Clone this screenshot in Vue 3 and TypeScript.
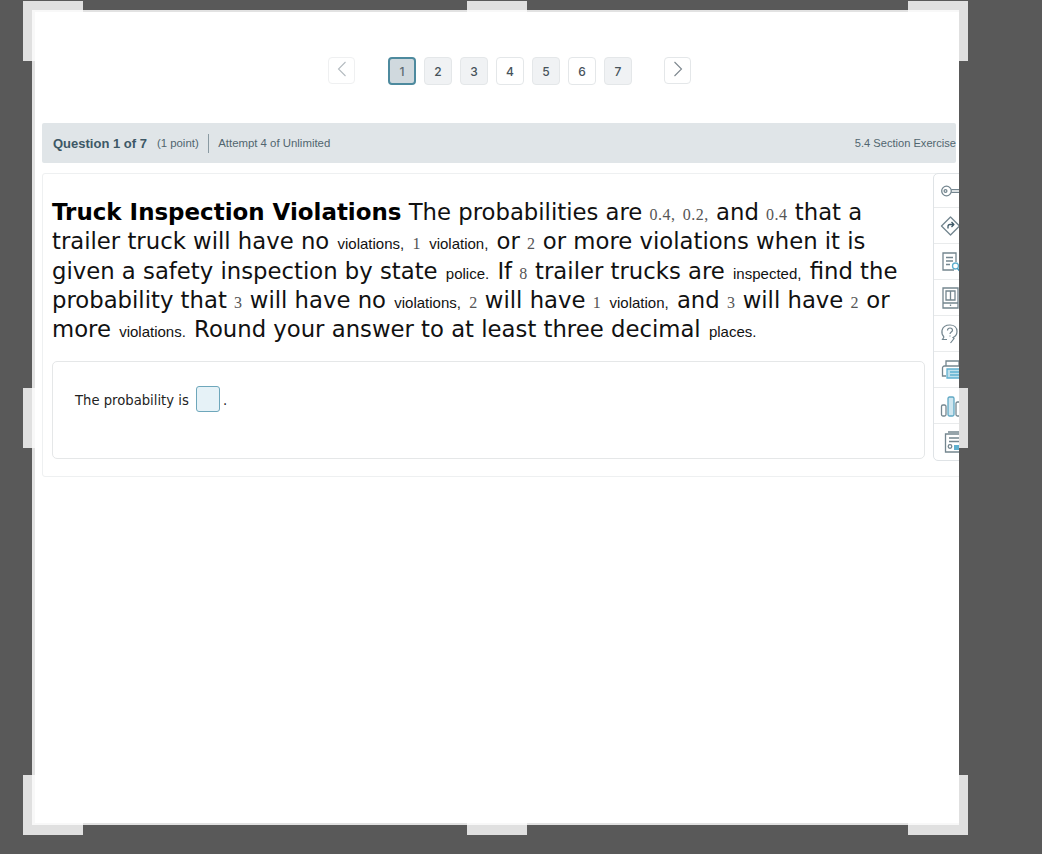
<script setup lang="ts">
const pages = [
  { n: 1, state: 'current' },
  { n: 2, state: 'seen' },
  { n: 3, state: 'seen' },
  { n: 4, state: 'plain' },
  { n: 5, state: 'seen' },
  { n: 6, state: 'plain' },
  { n: 7, state: 'seen' },
]

const handles = ['tl', 'tc', 'tr', 'ml', 'mr', 'bl', 'bc', 'br']
</script>

<template>
  <div class="backdrop">
    <div class="crop">
      <nav class="pager">
        <button class="arrow arrow--off">
          <svg viewBox="0 0 14 18" width="14" height="18" fill="none" stroke="#b4bbc0" stroke-width="1.1">
            <path d="M10.500 2 3.500 9l7 7" />
          </svg>
        </button>
        <div class="pages">
          <span v-for="p in pages" :key="p.n" class="page" :class="`page--${p.state}`">{{ p.n }}</span>
        </div>
        <button class="arrow arrow--next">
          <svg viewBox="0 0 14 18" width="14" height="18" fill="none" stroke="#7d878e" stroke-width="1.1">
            <path d="M3.500 2l7 7-7 7" />
          </svg>
        </button>
      </nav>

      <header class="qbar">
        <div class="qbar-left">
          <strong>Question 1 of 7</strong>
          <span class="pts">(1 point)</span>
          <span class="sep" />
          <span class="attempt">Attempt 4 of Unlimited</span>
        </div>
        <span class="section">5.4 Section Exercise</span>
      </header>

      <div class="qwrap">
        <section class="qcard">
          <p class="stem"><b>Truck Inspection Violations</b> The probabilities are <i class="n">0.4,</i> <i class="n">0.2,</i> and <i class="n">0.4</i> that a trailer truck will have no <small>violations,</small> <i class="n">1</i> <small>violation,</small> or <i class="n">2</i> or more violations when it is given a safety inspection by state <small>police.</small> If <i class="n">8</i> trailer trucks are <small>inspected,</small> find the probability that <i class="n">3</i> will have no <small>violations,</small> <i class="n">2</i> will have <i class="n">1</i> <small>violation,</small> and <i class="n">3</i> will have <i class="n">2</i> or more <small>violations.</small> Round your answer to at least three decimal <small>places.</small></p>
          <div class="answer">
            The probability is <span class="blank" />.
          </div>
        </section>

        <aside class="tools">
          <div class="tool">
            <svg viewBox="0 0 24 24" width="24" height="24" fill="none" stroke="#74868f" stroke-width="1.300">
              <circle cx="6.500" cy="12" r="4.800" />
              <circle cx="5.500" cy="12" r="1.400" />
              <path d="M11.200 10.600H23M11.200 13.400H23" />
            </svg>
          </div>
          <div class="tool">
            <svg viewBox="0 0 24 24" width="24" height="24" fill="none" stroke="#74868f" stroke-width="1.300" stroke-linejoin="round">
              <path d="M10.500 3 19.500 12 10.500 21 1.500 12Z" />
              <path d="M8 14.500v-2a2 2 0 0 1 2-2h3.500M11.500 8l2.400 2.500L11.500 13" stroke="#3f5a68" />
            </svg>
          </div>
          <div class="tool">
            <svg viewBox="0 0 24 24" width="24" height="24" fill="none" stroke="#74868f" stroke-width="1.300">
              <path d="M14 20H3V3h13v9" />
              <path d="M6 7.500h7M6 11h7M6 14.500h4" />
              <circle cx="15.500" cy="16" r="3" stroke="#5fb0cf" />
              <path d="M17.500 18.500 20 21.500" stroke="#2f8fb5" />
            </svg>
          </div>
          <div class="tool">
            <svg viewBox="0 0 24 24" width="24" height="24" fill="none" stroke="#74868f" stroke-width="1.300">
              <path d="M3 2h15v20H3z" />
              <path d="M6 5h9v9H6zM10.500 5v9M3 17h15" />
              <path d="M10.500 18.500v1.500" />
            </svg>
          </div>
          <div class="tool">
            <svg viewBox="0 0 24 24" width="24" height="24" fill="none" stroke="#74868f" stroke-width="1.200">
              <path d="M4 15c-1.800-2-2.500-4-2-6.500C2.800 5 6 3 10 3s7 2.500 7 6.500c0 3-1.500 5-4 6l1 1-3.500 4.500" />
              <path d="M4 15l-1.500 2.500H7" />
              <path d="M7.500 8.500c0-1.500 1-2.500 2.500-2.500s2.500 1 2.500 2.300c0 1.700-2.500 1.900-2.500 3.700M10 13.500v1" />
            </svg>
          </div>
          <div class="tool">
            <svg viewBox="0 0 24 24" width="24" height="24" fill="none" stroke="#74868f" stroke-width="1.300">
              <path d="M6 8V3h13v5" />
              <path d="M6 18H2.500V10A2 2 0 0 1 4.500 8H20" />
              <path d="M7 11h14v9H7z" fill="#bfe0ec" stroke="#5fb0cf" />
              <path d="M10 14h9M10 17h9" stroke="#5fb0cf" />
            </svg>
          </div>
          <div class="tool">
            <svg viewBox="0 0 24 24" width="24" height="24" fill="none" stroke="#74868f" stroke-width="1.300">
              <rect x="1.500" y="11" width="4.500" height="11" rx="1.500" />
              <rect x="8" y="3" width="6" height="19" rx="1.500" fill="#cfe6ef" stroke="#5fa8c4" />
              <rect x="16" y="8" width="5" height="14" rx="1.500" />
            </svg>
          </div>
          <div class="tool">
            <svg viewBox="0 0 24 24" width="24" height="24" fill="none" stroke="#74868f" stroke-width="1.300">
              <path d="M19 4H5.500v18H21" />
              <path d="M8 2h11M9 8h10M9 11.500h10" />
              <circle cx="10" cy="16.500" r="1.800" />
              <rect x="14" y="15" width="5" height="5" fill="#5fb0cf" stroke="none" />
            </svg>
          </div>
        </aside>
      </div>
    </div>

    <span v-for="h in handles" :key="h" class="handle" :class="`handle--${h}`" />
  </div>
</template>

<style>
html,
body {
  margin: 0;
  background: #595959;
}
</style>

<style scoped>
.backdrop {
  position: relative;
  width: 1042px;
  height: 854px;
  background: #595959;
  overflow: hidden;
  font-family: 'DejaVu Sans', sans-serif;
}

.crop {
  position: absolute;
  left: 32px;
  top: 10px;
  width: 927px;
  height: 815px;
  box-sizing: border-box;
  background: #fff;
  border-top: 2px solid #e2e2e2;
  border-left: 3px solid #e2e2e2;
  border-bottom: 2px solid #e2e2e2;
  overflow: hidden;
  padding: 45px 3px 0 7px;
}

/* pager */
.pager {
  display: flex;
  justify-content: center;
  align-items: flex-start;
  gap: 33px;
  height: 66px;
  padding-left: 21px;
}

.arrow {
  flex: none;
  width: 27px;
  height: 27px;
  padding: 0 0 3px;
  box-sizing: border-box;
  display: grid;
  place-items: center;
  background: #fff;
  border: 1.5px solid #e4e7e9;
  border-radius: 4px;
}

.arrow--off {
  border-color: #eff0f1;
}

.arrow--next {
  margin-left: -1px;
}

.pages {
  display: flex;
  gap: 8px;
}

.page {
  width: 28px;
  height: 28px;
  box-sizing: border-box;
  display: grid;
  place-items: center;
  font: 500 12px 'Inter', 'DejaVu Sans', sans-serif;
  color: #46525a;
  background: #fff;
  border: 1.5px solid #e4e7e9;
  border-radius: 4px;
}

.page--seen {
  background: #f0f2f4;
}

.page--current {
  background: #d0d9de;
  border: 2px solid #4d8a9e;
  color: #5b6a72;
}

/* question bar */
.qbar {
  height: 40px;
  display: flex;
  align-items: center;
  justify-content: space-between;
  padding: 0 0 0 11px;
  background: #e0e5e8;
  border-radius: 2px;
  font: 11.4px 'Liberation Sans', Arial, sans-serif;
  color: #51656f;
  white-space: nowrap;
}

.qbar-left {
  display: flex;
  align-items: center;
}

.qbar-left strong {
  font-size: 13px;
  color: #3d5866;
}

.pts {
  margin-left: 10px;
}

.sep {
  width: 1.5px;
  height: 19px;
  margin: 0 9px;
  background: #8a9aa2;
}

.section {
  font-size: 11.1px;
}

/* question */
.qwrap {
  position: relative;
  margin-top: 10px;
}

.qcard {
  box-sizing: border-box;
  width: 960px;
  height: 304px;
  padding: 24px 0 0 9px;
  border: 1.5px solid #eef0f1;
  border-radius: 3px;
}

.stem {
  width: 860px;
  margin: 0 0 17px;
  font-size: 22.75px;
  line-height: 29.3px;
  color: #111;
}

.stem b {
  font-size: 22.95px;
  font-weight: 700;
  color: #000;
}

.stem small {
  margin: 0 1px;
  font: 15px/1 'Liberation Sans', Arial, sans-serif;
}

.n {
  font: 16px/1 'Liberation Serif', serif;
  letter-spacing: 0.5px;
  color: #555;
}

.answer {
  box-sizing: border-box;
  width: 873px;
  height: 98px;
  padding: 24px 22px;
  border: 1.5px solid #e5e7e8;
  border-radius: 5px;
  font-size: 13.2px;
  color: #222;
}

.blank {
  display: inline-block;
  box-sizing: border-box;
  width: 24px;
  height: 26px;
  margin: 0 3px;
  vertical-align: -7px;
  background: #e6f2f7;
  border: 1.5px solid #6ea7bb;
  border-radius: 3px;
}

/* side tools, runs past the crop edge */
.tools {
  position: absolute;
  top: 0;
  left: 891px;
  width: 60px;
  height: 288px;
  box-sizing: border-box;
  background: #fff;
  border: 1.5px solid #dfe3e6;
  border-radius: 5px;
}

.tool {
  height: 36px;
  box-sizing: border-box;
  display: flex;
  align-items: center;
  padding-left: 6px;
  border-bottom: 1.5px solid #e9ebec;
}

.tool:first-child {
  height: 34px;
}

.tool:last-child {
  border-bottom: 0;
}

/* crop handles */
.handle {
  position: absolute;
  background: #e0e0e0;
}

.handle--tl,
.handle--tr,
.handle--bl,
.handle--br {
  width: 60px;
  height: 60px;
  box-sizing: border-box;
  background: transparent;
  border: 0 solid #e0e0e0;
}

.handle--tl {
  left: 23px;
  top: 1px;
  border-width: 9px 0 0 9px;
}

.handle--tr {
  left: 908px;
  top: 1px;
  border-width: 9px 9px 0 0;
}

.handle--bl {
  left: 23px;
  top: 775px;
  border-width: 0 0 10px 9px;
}

.handle--br {
  left: 908px;
  top: 775px;
  border-width: 0 9px 10px 0;
}

.handle--tc,
.handle--bc {
  left: 467px;
  width: 60px;
}

.handle--tc {
  top: 1px;
  height: 9px;
}

.handle--bc {
  top: 825px;
  height: 10px;
}

.handle--ml,
.handle--mr {
  top: 388px;
  width: 9px;
  height: 60px;
}

.handle--ml {
  left: 23px;
}

.handle--mr {
  left: 959px;
}

/* the crop edge line fades where a handle sits on it */
.handle::before,
.handle::after {
  content: '';
  position: absolute;
  background: #f8f8f8;
}

.handle--tl::before,
.handle--tr::before {
  left: 0;
  top: 0;
  width: 51px;
  height: 2px;
}

.handle--tl::after {
  left: 0;
  top: 0;
  width: 3px;
  height: 51px;
}

.handle--bl::before,
.handle--br::before {
  left: 0;
  bottom: 0;
  width: 51px;
  height: 2px;
}

.handle--bl::after {
  left: 0;
  bottom: 0;
  width: 3px;
  height: 50px;
}

.handle--ml::before {
  left: 9px;
  top: 0;
  width: 3px;
  height: 60px;
}

.handle--tc::before {
  left: 0;
  top: 9px;
  width: 60px;
  height: 2px;
}

.handle--bc::before {
  left: 0;
  top: -2px;
  width: 60px;
  height: 2px;
}
</style>
